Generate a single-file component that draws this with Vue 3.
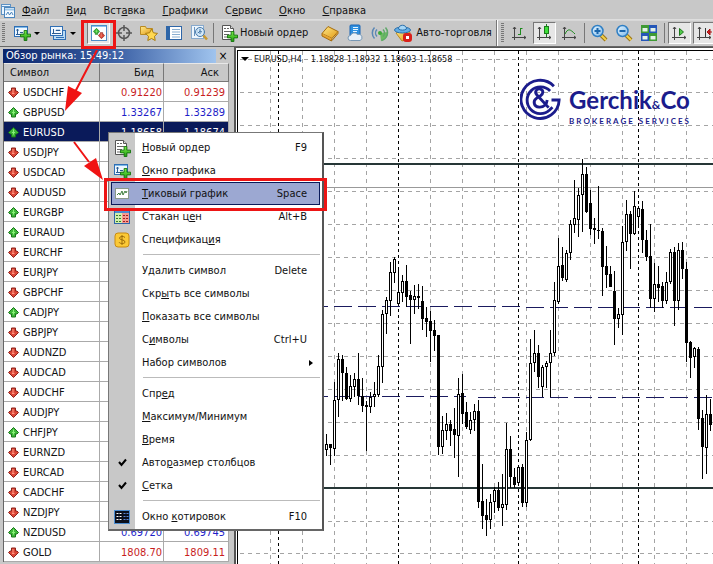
<script setup>
const parse = (text, hot) => ({ a: text.slice(0, hot), b: text[hot], c: text.slice(hot + 1) })

const menus = [
  ['Файл', 0], ['Вид', 0], ['Вставка', 3], ['Графики', 0], ['Сервис', 1], ['Окно', 0], ['Справка', 0],
].map(([t, h]) => parse(t, h))

const symbols = [
  ['USDCHF', 0, '0.91220', '0.91239'], ['GBPUSD', 1, '1.33267', '1.33289'],
  ['EURUSD', 1, '1.18658', '1.18674'], ['USDJPY', 0], ['USDCAD', 0], ['AUDUSD', 0],
  ['EURGBP', 1], ['EURAUD', 1], ['EURCHF', 0], ['EURJPY', 0], ['GBPCHF', 0], ['CADJPY', 1],
  ['GBPJPY', 0], ['AUDNZD', 0], ['AUDCAD', 0], ['AUDCHF', 0], ['AUDJPY', 0], ['CHFJPY', 1],
  ['EURNZD', 0], ['EURCAD', 0], ['CADCHF', 0], ['NZDJPY', 0],
  ['NZDUSD', 1, '0.69720', '0.69745'], ['GOLD', 0, '1808.70', '1809.11'],
].map(([name, up, bid = '', ask = '']) => ({ name, up, bid, ask }))

const groups = [
  [['Новый ордер', 0, 'F9', 'order'], ['Окно графика', 0, '', 'window'], ['Тиковый график', 0, 'Space', 'tick'],
    ['Стакан цен', 8, 'Alt+B', 'depth'], ['Спецификация', 10, '', 'spec']],
  [['Удалить символ', 1, 'Delete'], ['Скрыть все символы', 3, ''], ['Показать все символы', 0, ''],
    ['Символы', 1, 'Ctrl+U'], ['Набор символов', -1, '', 'sub']],
  [['Спред', 3, ''], ['Максимум/Минимум', 0, ''], ['Время', 0, ''],
    ['Авторазмер столбцов', 4, '', 'check'], ['Сетка', 0, '', 'check']],
  [['Окно котировок', 5, 'F10', 'quotes']],
].map(g => g.map(([t, h, key, icon]) => ({ ...(h < 0 ? { a: t, b: '', c: '' } : parse(t, h)), key, icon })))

// x, high, body top, body bottom, low, filled
const candles = [
  [326,434,444,450,456,0],[330,444,444,448,465,1],[334,382,400,449,456,0],[338,353,359,400,417,0],
  [342,355,359,373,401,1],[346,367,373,399,400,1],[350,375,386,399,402,0],[354,373,379,387,397,0],
  [358,353,379,396,405,1],[362,378,396,406,412,1],[366,401,405,407,451,1],[370,392,397,407,413,0],
  [374,382,394,397,407,0],[378,355,366,395,397,0],[382,310,314,367,383,0],[386,297,300,314,334,0],
  [390,262,272,301,316,0],[394,257,259,273,283,0],[398,268,292,304,305,0],[402,275,281,293,302,0],
  [406,265,281,297,307,1],[410,291,295,300,344,1],[414,285,296,300,314,0],[418,284,296,298,309,1],
  [422,286,301,319,330,1],[426,307,318,322,337,1],[430,311,321,331,362,1],[434,320,330,336,351,1],
  [438,335,335,447,455,1],[442,416,430,447,454,0],[446,413,424,431,440,0],[450,420,424,431,446,1],
  [454,408,429,435,458,1],[458,378,394,436,477,0],[462,374,393,414,424,1],[466,402,412,427,429,1],
  [470,412,420,430,434,0],[474,404,411,420,431,0],[478,400,411,502,508,1],[482,464,501,516,529,1],
  [486,499,515,520,536,1],[490,494,502,520,529,0],[494,487,490,502,513,0],[498,482,490,508,511,1],
  [502,474,504,508,526,0],[506,423,449,505,510,0],[510,436,449,477,488,1],[514,468,477,485,488,1],
  [518,467,467,483,485,0],[522,464,467,503,507,1],[526,432,440,503,507,0],[530,339,363,440,441,0],
  [534,330,353,363,372,0],[538,345,353,377,388,1],[542,365,367,387,397,0],[546,361,363,367,388,0],
  [550,330,353,363,397,0],[554,282,300,353,356,0],[558,238,266,302,304,0],[562,247,265,278,281,1],
  [566,250,253,280,282,0],[570,220,224,253,260,0],[574,180,218,225,233,0],[578,188,195,220,237,0],
  [582,159,174,195,232,0],[586,167,174,212,213,1],[590,190,203,229,235,1],[594,218,228,230,244,1],
  [598,186,230,231,239,1],[602,228,231,267,296,1],[606,246,266,275,288,1],[610,266,274,287,287,1],
  [614,271,291,319,345,1],[618,308,314,319,328,0],[622,226,242,315,335,0],[626,200,214,242,251,0],
  [630,211,214,234,269,1],[634,191,206,234,235,0],[638,206,208,217,226,0],[642,201,209,240,253,1],
  [646,230,240,257,261,1],[650,224,256,299,308,1],[654,263,284,299,312,0],[658,266,284,288,302,1],
  [662,282,286,301,308,1],[666,272,282,301,304,0],[670,249,252,282,284,0],[674,247,252,301,326,1],
  [678,243,250,301,310,0],[682,242,250,269,279,1],[686,262,269,343,362,1],[690,341,342,358,378,1],
  [694,347,348,357,368,0],[698,347,349,419,430,1],[702,410,418,447,479,1],[706,395,414,448,474,0],
  [710,399,414,425,431,1],
]
const gridX = [270, 302, 334, 366, 430, 462, 494, 526, 558, 590, 622, 654, 686]
const dayX = [278, 398, 518, 638]
const gridY = [59, 92, 125, 158, 191, 224, 257, 290, 323, 356, 389, 422, 455, 521, 553]
</script>

<template>
  <main class="terminal">
    <svg class="defs" width="0" height="0" aria-hidden="true">
      <defs>
        <linearGradient id="gold" x1="0" y1="0" x2="1" y2="1"><stop offset="0" stop-color="#ffe98a" /><stop offset="1" stop-color="#e29a12" /></linearGradient>
        <linearGradient id="blue" x1="0" y1="0" x2="1" y2="1"><stop offset="0" stop-color="#e8f6ff" /><stop offset="1" stop-color="#7db9ea" /></linearGradient>
        <linearGradient id="green" x1="0" y1="0" x2="0" y2="1"><stop offset="0" stop-color="#7cf04a" /><stop offset="1" stop-color="#1f9a10" /></linearGradient>
        <symbol id="plus" viewBox="0 0 12 12"><path d="M4.5.5h3v4h4v3h-4v4h-3v-4h-4v-3h4z" fill="url(#green)" stroke="#12720c" /></symbol>
        <symbol id="sheet" viewBox="0 0 18 18">
          <path d="M2.500 1.500h8l3 3v11h-11z" fill="#fff" stroke="#555" /><path d="M10.500 1.500v3h3" fill="#ddd" stroke="#555" />
          <path d="M4 4.500h2M7 4.500h2M4 7.500h7M4 10.500h5M4 13h4" stroke="#666" />
          <use href="#plus" x="7" y="7" width="11" height="11" />
        </symbol>
        <symbol id="chartplus" viewBox="0 0 18 18">
          <rect x="1.500" y="2.500" width="13" height="10" fill="#eef7ff" stroke="#2f6fb5" /><path d="M2 3.500h12" stroke="#7db9ea" />
          <path d="M4.500 5v6M3 10.500h9M3.500 6.500l1-1.500 1 1.500M7 8.500h3" stroke="#2b5d94" fill="none" />
          <use href="#plus" x="7" y="6" width="11" height="11" />
        </symbol>
        <symbol id="up" viewBox="0 0 11 11"><path d="M5.500.5l5 5-1.500 1.500h-1.500v3h-4v-3h-1.500l-1.500-1.500z" fill="#3fb93a" stroke="#187518" /><path d="M5.500 2.500v5M4 5.500h3" stroke="#8cf07a" /></symbol>
        <symbol id="down" viewBox="0 0 11 11"><path d="M5.500 10.500l-5-5 1.500-1.500h1.500v-3h4v3h1.500l1.500 1.500z" fill="#db4637" stroke="#8d2119" /><path d="M5 2v4M4 6.500h2.500" stroke="#ff9a86" /></symbol>
        <symbol id="axes" viewBox="0 0 18 18"><path d="M4.500 3v13M2 13.500h14M3 5l1.500-2 1.500 2M14 12l2 1.500-2 1.500" fill="none" stroke="#444" /></symbol>
      </defs>
    </svg>

    <nav class="menubar">
      <svg class="logo" viewBox="0 0 16 16" width="16" height="16"><rect x="1.500" y="1.500" width="9" height="10" fill="#eaf5ff" stroke="#5d92c4" /><path d="M2 3.500h8" stroke="#5d92c4" /><rect x="4.500" y="4.500" width="10" height="10" fill="#f4faff" stroke="#4d86bd" /><path d="M5 6.500h9" stroke="#9cc6e8" stroke-width="2" /><path d="M6 12l2-3 1.500 3 2-3 1.500 3" fill="none" stroke="#4d86bd" /></svg>
      <a v-for="m in menus" :key="m.b + m.c" href="#">{{ m.a }}<u>{{ m.b }}</u>{{ m.c }}</a>
    </nav>

    <div class="toolbar">
      <span class="grip"></span>
      <button class="drop" aria-label="Новый график"><svg viewBox="0 0 18 18"><use href="#chartplus" /></svg><i class="caret"></i></button>
      <button class="drop" aria-label="Профили"><svg viewBox="0 0 18 18"><rect x="4.500" y="6.500" width="12" height="9" fill="#b9dbf5" stroke="#2f6fb5" /><path d="M7 13.500h8" stroke="#2f6fb5" /><rect x="1.500" y="2.500" width="12" height="9" fill="#f2f9ff" stroke="#2f6fb5" /><path d="M4.500 5v5M3 9.500h9M7 6.500h4M7 6.500l1-1M11 6.500l-1-1" stroke="#2b5d94" /></svg><i class="caret"></i></button>
      <span class="gap"></span>
      <button class="pressed" aria-label="Обзор рынка"><svg viewBox="0 0 18 18"><rect x="1.500" y="1.500" width="15" height="15" fill="#fff" stroke="#4b8cc8" /><path d="M2 2.500h14" stroke="#8cc4f0" /><use href="#up" x="3" y="4" width="7" height="7" /><use href="#down" x="8" y="8" width="7" height="7" /></svg></button>
      <button aria-label="Перекрестие"><svg viewBox="0 0 18 18" fill="none" stroke="#555"><circle cx="9" cy="9" r="5.500" stroke-width="1.500" /><path d="M9 1v6M9 11v6M1 9h6M11 9h6" stroke-width="1.500" /></svg></button>
      <button aria-label="Навигатор"><svg viewBox="0 0 18 18"><path d="M.5 2.500h5l1 2h6v6h-12z" fill="url(#gold)" stroke="#b98a22" /><path d="M11.500 5l1.900 3.800 4.100.6-3 2.900.7 4.200-3.700-2-3.700 2 .7-4.200-3-2.900 4.100-.6z" fill="#ffd850" stroke="#a97c10" /></svg></button>
      <button aria-label="Окно данных"><svg viewBox="0 0 18 18"><rect x="1.500" y="2.500" width="15" height="13" fill="#fff" stroke="#2e66a8" /><path d="M3.500 3v12" stroke="#2e66a8" stroke-width="3" /><path d="M7 5.500h8M7 8h8M7 10.500h8M7 13h8" stroke="#8aaed0" /></svg></button>
      <button aria-label="Тестер"><svg viewBox="0 0 18 18"><rect x="1.500" y="1.500" width="12" height="13" fill="#eef6fd" stroke="#88aacd" /><path d="M4.500 3v9M7.500 4v7" stroke="#6a93bd" /><circle cx="10" cy="8" r="4.500" fill="#cde6f8" fill-opacity=".8" stroke="#4779aa" /><path d="M10 5v5M8 9l2-2 2 1" stroke="#4779aa" fill="none" /><path d="M13.500 11.500l3.500 4" stroke="#c99a30" stroke-width="2.500" /></svg></button>
      <span class="sep"></span>
      <button class="label"><svg viewBox="0 0 18 18"><use href="#sheet" /></svg>Новый ордер</button>
      <span class="gap"></span>
      <button aria-label="MetaEditor"><svg viewBox="0 0 18 18"><path d="M1 9.500l6-7 10 5-6 7z" fill="url(#gold)" stroke="#a56c0d" /><path d="M1 9.500v2.500l9.500 5 .5-2.500M11 16.500l6-7v-2" fill="#e9a632" stroke="#a56c0d" /></svg></button>
      <button aria-label="Виртуальный хостинг"><svg viewBox="0 0 18 18"><rect x="4" y="1" width="10" height="11" rx="1" fill="#2d8fe0" stroke="#1a65b4" /><path d="M7 3.500h5M7 5.500h5M7 7.500h4" stroke="#e6f5ff" /><path d="M4.500 16.500a2.500 2.500 0 0 1 0-5 4 4 0 0 1 7-1 3 3 0 0 1 2.500 6z" fill="#e7f0f8" stroke="#7898b5" /></svg></button>
      <button aria-label="Сигналы"><svg viewBox="0 0 18 18" fill="none"><path d="M9 9l8-1c0 5-3 8-7 9z" fill="#55b848" fill-opacity=".8" /><circle cx="9" cy="9" r="2" fill="#3da83a" /><path d="M6 5.500a5 5 0 0 0 0 7M3.500 3.500a8 8 0 0 0 0 11" stroke="#5b87b5" stroke-width="1.500" /><path d="M12 5.500a5 5 0 0 1 0 7M14.500 3.500a8 8 0 0 1-4 13" stroke="#5fa86a" stroke-width="1.500" /></svg></button>
      <button class="label auto"><svg viewBox="0 0 18 18"><path d="M2 9l7-3 7 2-2 7-6 2z" fill="url(#gold)" stroke="#b98a22" /><ellipse cx="8.500" cy="6" rx="8" ry="3" fill="#63aee6" stroke="#2b6fac" /><path d="M4.500 5c0-5 8-5 8 0-2 1.500-6 1.500-8 0z" fill="#a6d6f6" stroke="#2b6fac" /><rect x="9" y="9" width="9" height="9" rx="3" fill="#d9201a" /><rect x="12" y="12" width="3" height="3" fill="#fff" /></svg>Авто-торговля</button>
      <span class="edge"></span>
      <span class="grip"></span>
      <button aria-label="Бары"><svg viewBox="0 0 18 18"><use href="#axes" /><path d="M10.500 4v7M10.500 4.500h2M8 10.500h2" stroke="#1d8a1d" /></svg></button>
      <button class="pressed" aria-label="Свечи"><svg viewBox="0 0 18 18"><use href="#axes" /><path d="M11.500 0v13" stroke="#1d7a1d" /><rect x="9.500" y="2.500" width="4" height="7" fill="#3fe03a" stroke="#1d7a1d" /></svg></button>
      <button aria-label="Линия"><svg viewBox="0 0 18 18"><use href="#axes" /><path d="M5 10c3-6 5-5 10 0" fill="none" stroke="#1d8a1d" /></svg></button>
      <span class="sep"></span>
      <button v-for="z in ['Увеличить', 'Уменьшить']" :key="z" :aria-label="z"><svg viewBox="0 0 18 18"><path d="M11 11l5 5" stroke="#9a7414" stroke-width="4" /><path d="M11 11l5 5" stroke="#f2cf4a" stroke-width="2" /><circle cx="7.500" cy="7" r="5.500" fill="url(#blue)" stroke="#2f7fc4" stroke-width="1.500" /><path d="M4.500 7h6" stroke="#1b66ac" stroke-width="2" /><path v-if="z === 'Увеличить'" d="M7.500 4v6" stroke="#1b66ac" stroke-width="2" /></svg></button>
      <button aria-label="Плитка"><svg viewBox="0 0 18 18"><path d="M1 1h8v8H1zM9 9h8v8H9z" fill="#3f9a34" /><path d="M9 1h8v8H9zM1 9h8v8H1z" fill="#2456b8" /><path d="M2.500 4h5v3.500h-5zM10.500 4h5v3.500h-5zM2.500 12h5v3.500h-5zM10.500 12h5v3.500h-5z" fill="#e4f2e8" /></svg></button>
      <span class="sep"></span>
      <button class="pressed" aria-label="Автопрокрутка"><svg viewBox="0 0 18 18"><use href="#axes" /><path d="M9.500 4.500v7l4-3.500z" fill="#52c94a" stroke="#1d7a1d" /></svg></button>
      <button class="pressed" aria-label="Сдвиг графика"><svg viewBox="0 0 18 18"><use href="#axes" /><path d="M10.500 4v9" stroke="#333" /><path d="M17 8h-3M15 5l-3 3 3 3z" fill="#c22" stroke="#a11" /></svg></button>
      <span class="mark"></span>
    </div>

    <div class="work">
      <aside class="watch">
        <div class="caption"><span>Обзор рынка: 15:49:12</span><button aria-label="Закрыть">×</button></div>
        <table>
          <thead><tr><th>Символ</th><th>Бид</th><th>Аск</th></tr></thead>
          <tbody>
            <tr v-for="s in symbols" :key="s.name" :class="{ up: s.up, active: s.name === 'EURUSD' }">
              <td><svg viewBox="0 0 11 11" width="11" height="11"><use :href="s.up ? '#up' : '#down'" /></svg>{{ s.name }}</td>
              <td>{{ s.bid }}</td><td>{{ s.ask }}</td>
            </tr>
          </tbody>
        </table>
      </aside>

      <section class="chart">
        <svg class="plot" viewBox="238 51 475 513" preserveAspectRatio="xMinYMin slice" shape-rendering="crispEdges">
          <g class="grid"><path v-for="x in gridX" :key="x" :d="`M${x}.5 51V900`" /><path v-for="y in gridY" :key="y" :d="`M240 ${y}.5H1600`" /></g>
          <g class="days"><path v-for="x in dayX" :key="x" :d="`M${x}.5 51V900`" /></g>
          <path d="M238 187.500H1600" stroke="#999" />
          <path class="level" d="M310 306.500H520M310 396.500H466" /><path class="level" d="M526 307.500H1600M478 397.500H1600" />
          <path d="M238 164H1600M238 488H1600" stroke="#263636" stroke-width="2" />
          <g v-for="c in candles" :key="c[0]">
            <rect :x="c[0]" :y="c[1]" width="1" :height="c[4] - c[1]" />
            <rect :x="c[0] - 1" :y="c[2]" width="3" :height="c[3] - c[2]" />
            <rect v-if="!c[5]" :x="c[0]" :y="c[2] + 1" width="1" :height="Math.max(1, c[3] - c[2] - 2)" fill="#fff" />
          </g>
        </svg>
        <p class="quote"><i class="caret"></i><span>EURUSD,H4</span><span>1.18828 1.18932 1.18603 1.18658</span></p>
        <div class="brand">
          <svg viewBox="0 0 44 44" width="42" height="44" fill="none" stroke="#1b1c8c">
            <path d="M35.500 7.500A20 20 0 1 0 41 22h-8" stroke-width="3" />
            <path d="M31.500 12.500A14 14 0 1 0 31 32.500l3-3" stroke-width="3" />
            <path d="M30 30L17.500 16.500c-3-4 1-7 4-6 3.500 1.200 3 5 0 7l-4 2.500c-4.500 3-3 9 2.500 9.500 5 .4 8-3 8.500-7.500" stroke-width="3" />
          </svg>
          <div><strong>Gerchik<small>&amp;</small>Co</strong><span>BROKERAGE SERVICES</span></div>
        </div>
      </section>
    </div>

    <div class="popup">
      <div v-for="(g, i) in groups" :key="i" class="group">
        <button v-for="it in g" :key="it.a + it.b + it.c" class="item" :class="{ hot: it.icon === 'tick' }">
          <span class="ico">
            <svg v-if="it.icon === 'order'" viewBox="0 0 18 18"><use href="#sheet" /></svg>
            <svg v-else-if="it.icon === 'window'" viewBox="0 0 18 18"><use href="#chartplus" /></svg>
            <svg v-else-if="it.icon === 'tick'" viewBox="0 0 18 18"><rect x="2.500" y="3.500" width="13" height="10" fill="#fff" stroke="#8a9a8a" /><path d="M4 10l2-2 1 2 2-4 1 4 2-4 1 2 1-2" fill="none" stroke="#3f7f3f" /></svg>
            <svg v-else-if="it.icon === 'depth'" viewBox="0 0 18 18"><rect x="1.500" y="2.500" width="15" height="13" fill="#fff" stroke="#2e66a8" /><path d="M2 4h14" stroke="#4b8cd0" stroke-width="2" /><path d="M2 5h7v10H2z" fill="#d0efac" /><path d="M9 5h7v10H9z" fill="#f59a90" /><path d="M3 7.500h2M6 7.500h2M3 10.500h2M6 10.500h2M3 13.500h2M6 13.500h2" stroke="#3a7a2a" /><path d="M10 7.500h2M13 7.500h2M10 10.500h2M13 10.500h2M10 13.500h2M13 13.500h2" stroke="#a02020" /></svg>
            <svg v-else-if="it.icon === 'spec'" viewBox="0 0 18 18"><rect x="2" y="2" width="14" height="14" rx="3" fill="#fbc936" stroke="#c98b10" /><path d="M12 6.500c-1-1.500-5.500-1.500-5.500.6C6.500 9.500 12 8.200 12 11c0 2-5 2-6 .2M9 4v10" fill="none" stroke="#9a6a08" /></svg>
            <svg v-else-if="it.icon === 'check'" viewBox="0 0 18 18"><path d="M6 8l2.500 3L13 5.500" fill="none" stroke="#000" stroke-width="2" /></svg>
            <svg v-else-if="it.icon === 'quotes'" viewBox="0 0 18 18"><rect x="1.500" y="2.500" width="15" height="13" fill="#0a0f1c" stroke="#4b8cd0" /><path d="M4.500 5v9M7.500 5v9" stroke="#fff" stroke-width="2" stroke-dasharray="1 2" /><path d="M11.500 5v9M14.500 5v9" stroke="#5a86d8" stroke-dasharray="1 2" stroke-width="2" /></svg>
          </span>
          <span class="text">{{ it.a }}<u>{{ it.b }}</u>{{ it.c }}</span>
          <kbd v-if="it.key">{{ it.key }}</kbd>
          <i v-if="it.icon === 'sub'" class="sub"></i>
        </button>
      </div>
    </div>
    <div class="frame"></div>
    <svg class="arrows" width="120" height="150" viewBox="0 0 120 150"><path d="M37 0L14 44M14 92L29 112" stroke="#f01414" stroke-width="2" fill="none" /><path d="M5 61l3-25 14 7zM43 130l-19-14 12-8z" fill="#f01414" /></svg>
  </main>
</template>

<style>
body { margin: 0; background: #c8c8c8; overflow: hidden; }
</style>

<style scoped>
* { box-sizing: border-box; }
.terminal { position: relative; display: flex; flex-direction: column; height: 100vh; overflow: hidden; color: #111; background: #c8c8c8; font: 11px/14px "DejaVu Sans Condensed", "Noto Sans", sans-serif; }
.defs { position: absolute; }
button { display: flex; align-items: center; justify-content: center; flex: none; padding: 0; border: 0; background: none; color: inherit; font: inherit; }
svg { flex: none; }
a { color: inherit; text-decoration: none; }
u { text-underline-offset: 1px; }
.menubar { display: flex; align-items: center; gap: 17px; height: 20px; padding: 2px 0 0; border-bottom: 1px solid #dedede; white-space: nowrap; flex: none; }
.menubar .logo { margin-right: -11px; }
.toolbar { position: relative; display: flex; align-items: center; height: 27px; padding: 0 2px; border-bottom: 1px solid #666; box-shadow: inset 0 1px #d8d8d8; white-space: nowrap; flex: none; }
.toolbar > * { flex: none; }
.toolbar button { width: 25px; height: 22px; }
.toolbar svg { width: 18px; height: 18px; }
.toolbar .drop { width: 36px; gap: 3px; }
.toolbar .label { width: auto; gap: 2px; padding-left: 4px; }
.toolbar .auto { padding: 0 4px 0 2px; gap: 4px; }
.toolbar .pressed { background: #e6e6e6; border: 1px solid; border-color: #777 #fff #fff #777; width: 23px; margin: 0 1px; }
.gap { width: 6px; }
.label + .gap { width: 9px; }
.grip { width: 3px; height: 20px; margin-right: 3px; background: repeating-linear-gradient(#777 0 1px, #c8c8c8 1px 2px); }
.sep { width: 1px; height: 20px; margin: 0 2px; background: #777; }
.edge { width: 2px; height: 26px; margin-right: 3px; border-left: 1px solid #777; background: #fff; }
.mark { position: absolute; left: 81px; top: 0; width: 35px; height: 29px; border: 3px solid #ed1515; z-index: 3; }
.caret { width: 0; height: 0; border: 3px solid transparent; border-top-color: #000; border-bottom: 0; }
.work { display: flex; flex: 1; min-height: 0; }
.watch { flex: none; width: 234px; padding: 2px 4px 0 3px; }
.caption { display: flex; align-items: center; justify-content: space-between; height: 14px; color: #fff; white-space: nowrap; }
.caption span { flex: 1; height: 14px; padding-left: 3px; line-height: 13px; background: linear-gradient(90deg, #0a246a, #3f64a8 55%, #a0c4ee); }
.caption button { width: 14px; color: #000; font-size: 12px; line-height: 12px; }
table { width: 226px; border-collapse: separate; border-spacing: 0; table-layout: fixed; background: #fff; border-left: 1px solid #666; }
th { height: 19px; padding: 0 9px 0 6px; font-weight: 400; text-align: right; background: #c8c8c8; border-right: 1px solid #777; border-bottom: 1px solid #777; border-top: 1px solid #e8e8e8; }
th:first-child { width: 96px; text-align: left; }
th:nth-child(2) { width: 64px; }
td { height: 20px; padding: 2px 1px 0 4px; text-align: right; color: #c81e1e; border-right: 1px solid #aaa; border-bottom: 1px solid #aaa; line-height: 14px; }
td:last-child { padding-right: 3px; }
td:first-child { text-align: left; color: #111; }
td svg { display: inline-block; vertical-align: -2px; margin-right: 4px; }
.up td { color: #1e1ec8; }
.up td:first-child { color: #111; }
.active td, .active td:first-child { background: #0a1a5a; color: #fff; }
.chart { position: relative; flex: 1; min-width: 0; overflow: hidden; background: #fff; border-left: 2px solid #555; border-top: 1px solid #555; }
.chart::before { content: ""; position: absolute; inset: 2px 0 0 1px; border: solid #000; border-width: 1px 0 0 1px; }
.plot { position: absolute; left: 2px; top: 3px; width: calc(100% - 2px); height: calc(100% - 3px); }
.grid path { stroke: #a4a4a4; stroke-dasharray: 4 4; }
.days path { stroke: #000; stroke-dasharray: 3 3; }
.level { stroke: #1a1a5e; stroke-dasharray: 18 6; }
.quote { position: absolute; left: 5px; top: 4px; display: flex; align-items: center; gap: 5px; margin: 0; font-size: 9px; white-space: nowrap; }
.quote span + span { margin-left: 4px; }
.quote .caret { border-width: 4px 4px 0; }
.brand { position: absolute; right: 22px; top: 30px; display: flex; align-items: flex-start; gap: 7px; color: #1b1c8c; font-family: Lato, sans-serif; }
.brand div { display: flex; flex-direction: column; padding-top: 10px; }
.brand strong { font-size: 24px; line-height: 24px; font-weight: 700; }
.brand small { font-size: 12px; }
.brand span { font-size: 8px; line-height: 8px; font-weight: 700; letter-spacing: 2px; }
.popup { position: absolute; left: 108px; top: 132px; width: 216px; padding: 3px 2px 1px; border: 1px solid #777; border-right: 2px solid #555; border-bottom: 2px solid #666; background: linear-gradient(90deg, #c8c8c8 26px, #fff 26px); z-index: 1; }
.group + .group { margin-top: 4px; padding-top: 4px; position: relative; }
.group + .group::before { content: ""; position: absolute; left: 32px; right: 0; top: -1px; border-top: 1px solid #bbb; }
.item { width: 100%; height: 23px; justify-content: flex-start; padding-right: 12px; border: 1px solid transparent; }
.ico { display: flex; width: 24px; margin-right: 6px; }
.ico svg { width: 18px; height: 18px; margin-left: 1px; }
.text { flex: 1; text-align: left; white-space: nowrap; }
kbd { font: inherit; }
.hot { background: #9ca8d2; border-color: #0a1a5a; }
.sub { border: 3px solid transparent; border-left: 4px solid #000; border-right: 0; margin-right: -6px; }
.frame { position: absolute; left: 104px; top: 178px; width: 223px; height: 33px; border: 3px solid #ed1515; z-index: 3; }
.arrows { position: absolute; left: 60px; top: 50px; z-index: 3; pointer-events: none; }
</style>
